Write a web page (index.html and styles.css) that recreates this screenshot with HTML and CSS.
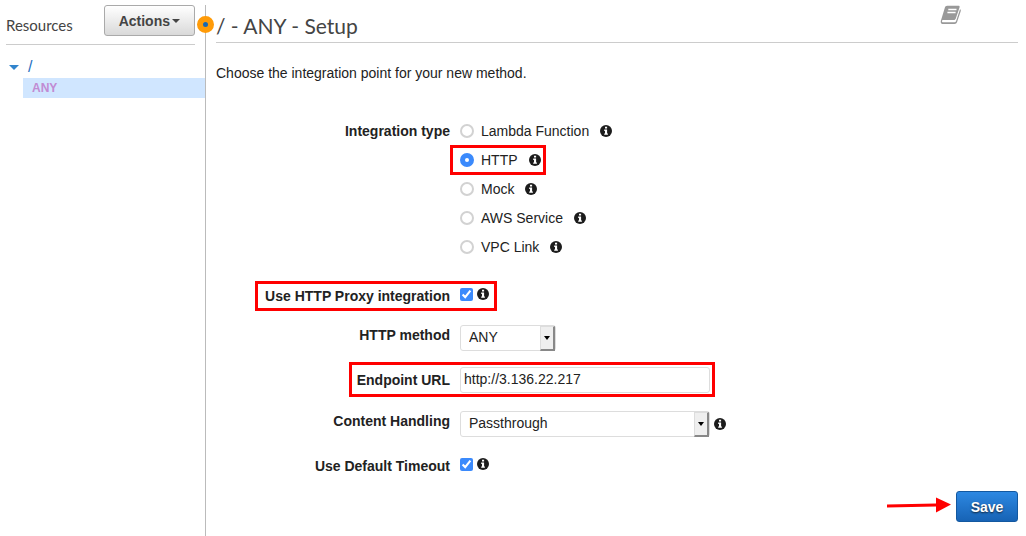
FILE: index.html
```html
<!DOCTYPE html>
<html lang="en">
<head>
<meta charset="utf-8">
<title>/ - ANY - Setup</title>
<link rel="stylesheet" href="styles.css">
</head>
<body>
<svg class="defs" width="0" height="0" aria-hidden="true">
  <symbol id="info" viewBox="0 0 12 12">
    <circle cx="6" cy="6" r="6" fill="#1c1c1c"/>
    <path fill="#fff" d="M5 1.8h2.1v1.8H5zM4.2 4.5h2.9v3.9h.8v1.4H4.2V8.4H5V5.9h-.8z"/>
  </symbol>
</svg>
<div class="app">
  <aside class="sidebar">
    <div class="sidebar-head">
      <h2 class="sidebar-title">Resources</h2>
      <button class="actions" type="button">Actions<span class="caret"></span></button>
    </div>
    <nav class="tree">
      <a class="tree-root" href="#"><span class="toggle"></span>/</a>
      <a class="tree-method" href="#">ANY</a>
    </nav>
    <span class="handle"></span>
  </aside>
  <main class="main">
    <header class="head">
      <h1 class="title">/ - ANY - Setup</h1>
      <a class="docs" href="#" aria-label="Documentation">
        <svg width="22" height="20" viewBox="0 0 22 20">
          <path fill="#999" d="M7.2.7h11.2c1 0 1.500.7 1.200 1.600l-3.800 11.300c-.3.9-1 1.500-2 1.500H3.300c-1 0-1.500.6-1.300 1.300.2.7.8.9 1.500.9h11c.8 0 1.300-.4 1.600-1.200l3.900-11.800c.8.4 1 1 .7 1.900l-3.600 10.900c-.4 1.300-1.300 2-2.600 2H3.200C1.400 19.100.3 17.600.8 15.900L4.900 2.500C5.200 1.400 6 .7 7.200.7z"/>
          <path stroke="#fff" stroke-width="1.400" d="M8.300 4.500h8.200M7.400 7.500h8.200"/>
        </svg>
      </a>
    </header>
    <p class="intro">Choose the integration point for your new method.</p>
    <form class="form">
      <div class="row row-types" role="radiogroup" aria-labelledby="type-label">
        <span class="label" id="type-label">Integration type</span>
        <div class="types">
          <div class="type"><label class="choice"><input class="radio" type="radio" name="type">Lambda Function</label><svg class="info"><use href="#info"/></svg></div>
          <div class="type marked marked-type"><label class="choice"><input class="radio" type="radio" name="type" checked>HTTP</label><svg class="info"><use href="#info"/></svg></div>
          <div class="type"><label class="choice"><input class="radio" type="radio" name="type">Mock</label><svg class="info"><use href="#info"/></svg></div>
          <div class="type"><label class="choice"><input class="radio" type="radio" name="type">AWS Service</label><svg class="info"><use href="#info"/></svg></div>
          <div class="type"><label class="choice"><input class="radio" type="radio" name="type">VPC Link</label><svg class="info"><use href="#info"/></svg></div>
        </div>
      </div>
      <div class="row row-check marked marked-proxy">
        <label class="label" for="proxy">Use HTTP Proxy integration</label>
        <div class="field"><input class="check" id="proxy" type="checkbox" checked><svg class="info"><use href="#info"/></svg></div>
      </div>
      <div class="row">
        <label class="label" for="method">HTTP method</label>
        <div class="field"><span class="picker picker-short"><select class="select" id="method"><option>ANY</option></select><span class="arrow"></span></span></div>
      </div>
      <div class="row row-url marked marked-url">
        <label class="label" for="url">Endpoint URL</label>
        <div class="field"><input class="text" id="url" type="text" value="http://3.136.22.217"></div>
      </div>
      <div class="row">
        <label class="label" for="content">Content Handling</label>
        <div class="field"><span class="picker"><select class="select" id="content"><option>Passthrough</option></select><span class="arrow"></span></span><svg class="info"><use href="#info"/></svg></div>
      </div>
      <div class="row row-check">
        <label class="label" for="timeout">Use Default Timeout</label>
        <div class="field"><input class="check" id="timeout" type="checkbox" checked><svg class="info"><use href="#info"/></svg></div>
      </div>
      <div class="footer">
        <svg class="pointer" width="66" height="16" viewBox="0 0 66 16" aria-hidden="true">
          <path d="M1 9L50 8" stroke="#f00" stroke-width="3"/>
          <path d="M50 0.500L65 7.500L50 15.500z" fill="#f00"/>
        </svg>
        <button class="save" type="submit">Save</button>
      </div>
    </form>
  </main>
</div>
</body>
</html>
```
FILE: styles.css
```css
*, *::before, *::after { box-sizing: border-box; }
body {
  margin: 0;
  background: #fff;
  color: #222;
  font: 14px/20px "Liberation Sans", Arial, sans-serif;
}
.defs { position: absolute; }
.app {
  display: grid;
  grid-template-columns: 206px 1fr;
  min-height: 100vh;
  padding-top: 5px;
}
.sidebar {
  position: relative;
  border-right: 1px solid #bbb;
}
.sidebar-head {
  display: flex;
  align-items: flex-start;
  justify-content: space-between;
  height: 40px;
  margin: 0 10px 0 6px;
  border-bottom: 1px solid #ccc;
}
.sidebar-title {
  margin: 10px 0 0;
  color: #444;
  font: 15px/20px Lato, sans-serif;
}
.actions {
  display: flex;
  align-items: center;
  gap: 2px;
  height: 31px;
  padding: 0 14px;
  border: 1px solid #aaa;
  border-radius: 3px;
  background: linear-gradient(#fff, #d9d9d9);
  color: #444;
  font: bold 14px/20px "Liberation Sans", Arial, sans-serif;
}
.caret {
  border: 4px solid transparent;
  border-top-color: #444;
  border-bottom: 0;
}
.tree { padding-top: 11px; }
.tree a {
  display: flex;
  align-items: center;
  text-decoration: none;
}
.tree .tree-root {
  height: 22px;
  gap: 9px;
  padding-left: 9px;
  color: #1f70c1;
  font-size: 16px;
}
.toggle {
  border: 5px solid transparent;
  border-top-color: #3184cd;
  border-bottom: 0;
}
.tree .tree-method {
  height: 20px;
  margin-left: 23px;
  padding-left: 9px;
  background: #d0e6ff;
  color: #c18bd3;
  font-size: 12px;
  font-weight: bold;
}
.handle {
  position: absolute;
  top: 11px;
  right: -9px;
  width: 17px;
  height: 17px;
  border: 6px solid #ff9b08;
  border-radius: 50%;
  background: #1769b5;
}
.main { padding: 0 8px 14px 10px; }
.head {
  display: flex;
  justify-content: space-between;
  height: 38px;
  border-bottom: 1px solid #ccc;
}
.title {
  margin: 8px 0 0;
  color: #444;
  font: 21px/26px Lato, sans-serif;
}
.docs {
  height: 20px;
  margin-right: 56px;
}
.intro { margin: 20px 0 33px; }
.row {
  position: relative;
  display: grid;
  grid-template-columns: 234px 1fr;
  column-gap: 10px;
  margin-bottom: 14px;
}
.label {
  text-align: right;
  font-weight: bold;
}
.row-types { margin-bottom: 20px; }
.row-types .label { line-height: 30px; }
.types { justify-self: start; }
.type {
  position: relative;
  display: flex;
  align-items: center;
  gap: 11px;
  width: fit-content;
  height: 29px;
}
.choice {
  display: flex;
  align-items: center;
  gap: 7px;
}
.field {
  display: flex;
  align-items: center;
  gap: 4px;
}
.info {
  flex: none;
  width: 12px;
  height: 12px;
}
.radio {
  appearance: none;
  width: 14px;
  height: 14px;
  margin: 0;
  border: 2px solid #d2d2d2;
  border-radius: 50%;
  background: #fff;
}
.radio:checked {
  border: 5px solid #3b8afc;
}
.check {
  width: 13px;
  height: 13px;
  margin: 0;
  accent-color: #3b8afc;
}
.row-check .label { line-height: 30px; }
.row-check .field {
  height: 26px;
}
.row-url {
  align-items: center;
  padding: 2px 0 4px;
}
.text {
  width: 250px;
  height: 26px;
  padding: 0 3px 2px;
  border: 1px solid #ddd;
  border-radius: 3px;
  background: #fff;
  color: #222;
  font: inherit;
}
.picker {
  position: relative;
  width: 250px;
  height: 26px;
}
.picker-short { width: 96px; }
.select {
  appearance: none;
  width: 100%;
  height: 100%;
  padding: 0 20px 2px 8px;
  border: 1px solid #ddd;
  border-radius: 3px;
  background: #fff;
  color: #222;
  font: inherit;
}
.arrow {
  position: absolute;
  top: 1px;
  right: 1px;
  bottom: 0;
  display: grid;
  place-items: center;
  width: 15px;
  border: solid #ddd;
  border-width: 1px 2px 2px 1px;
  border-right-color: #888;
  border-bottom-color: #888;
  background: #efefef;
  pointer-events: none;
}
.arrow::before {
  content: "";
  border: 3px solid transparent;
  border-top: 4px solid #000;
  border-bottom: 0;
}
.marked::after {
  content: "";
  position: absolute;
  border: 3px solid #f00;
  pointer-events: none;
}
.marked-type::after { inset: 0 -5px -1px -10px; }
.marked-proxy::after {
  top: 0;
  bottom: 0;
  left: 39px;
  width: 242px;
}
.marked-url::after {
  top: -3px;
  bottom: 0;
  left: 133px;
  width: 366px;
}
.footer {
  display: flex;
  align-items: center;
  justify-content: flex-end;
  gap: 4px;
  margin-top: -4px;
}
.pointer { margin-bottom: 3px; }
.save {
  min-width: 62px;
  height: 31px;
  padding: 0 13px;
  border: 1px solid #1358a0;
  border-radius: 3px;
  background: linear-gradient(#2d88e2, #1763b5);
  color: #fff;
  font: bold 14px/20px "Liberation Sans", Arial, sans-serif;
  text-shadow: 0 1px 2px #123;
}
```
